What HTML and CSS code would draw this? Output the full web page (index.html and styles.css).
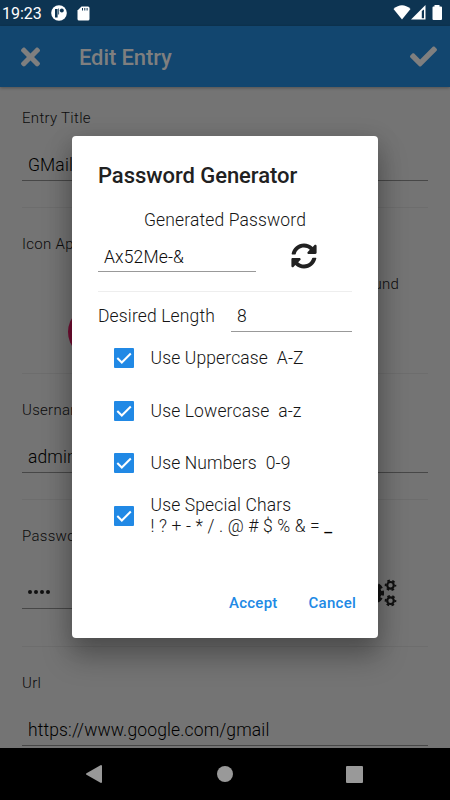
FILE: index.html
```html
<!DOCTYPE html>
<html lang="en">
<head>
<meta charset="utf-8">
<title>Password Generator</title>
<link rel="stylesheet" href="styles.css">
</head>
<body>
<div class="screen">
  <div class="status">
    <span class="clock">19:23</span>
    <svg class="st-app" width="16" height="16" viewBox="0 0 16 16"><circle cx="8" cy="8" r="7.8" fill="#fff"/><path d="M5.300 4v8.500" stroke="#0d3452" stroke-width="2.600" fill="none"/><circle cx="10.800" cy="5.600" r="2" fill="#0d3452"/><path d="M7.600 3.500v6" stroke="#0d3452" stroke-width=".8"/></svg>
    <svg class="st-sd" width="13" height="15" viewBox="0 0 13 15"><path d="M4.500.500H11q1.500 0 1.500 1.500v11q0 1.500-1.500 1.500H2Q.500 14.500.500 13V4.500z" fill="#fff"/><path d="M5.500 2v2.500M7.800 2v2.500M10.100 2v2.500" stroke="#0d3452" stroke-width="1"/></svg>
    <svg class="st-right" width="50" height="16" viewBox="0 0 50 16"><path d="M0.500 4Q9-3.500 17.500 4L9 14.500z" fill="#fff"/><path d="M32.500 0v14.500H18z" fill="#fff"/><path d="M28.800 6v7.200h2.200V4.500z" fill="#0d3452"/><path d="M41.500 1.500V0h5v1.500H48q1 0 1 1V14q0 1-1 1h-7.500q-1 0-1-1V2.500q0-1 1-1z" fill="#fff"/></svg>
  </div>
  <header class="bar">
    <svg class="close" width="19" height="28" viewBox="0 0 352 512"><path fill="currentColor" d="M242.720 256l100.070-100.070c12.280-12.280 12.280-32.190 0-44.480l-22.240-22.240c-12.280-12.280-32.190-12.280-44.480 0L176 189.280 75.930 89.210c-12.280-12.280-32.190-12.280-44.480 0L9.210 111.450c-12.280 12.280-12.280 32.190 0 44.480L109.280 256 9.210 356.070c-12.280 12.280-12.280 32.190 0 44.480l22.240 22.240c12.280 12.280 32.200 12.280 44.480 0L176 322.720l100.070 100.070c12.280 12.280 32.200 12.280 44.480 0l22.240-22.240c12.280-12.280 12.280-32.190 0-44.480L242.720 256z"/></svg>
    <h1>Edit Entry</h1>
    <svg class="check" width="27" height="27" viewBox="0 0 512 512"><path fill="currentColor" d="M173.898 439.404l-166.400-166.400c-9.997-9.997-9.997-26.206 0-36.204l36.203-36.204c9.997-9.998 26.207-9.998 36.204 0L192 312.690 432.095 72.596c9.997-9.997 26.207-9.997 36.204 0l36.203 36.204c9.997 9.997 9.997 26.206 0 36.204l-294.400 294.401c-9.998 9.997-26.207 9.997-36.204-.001z"/></svg>
  </header>
  <main class="form">
    <section class="sec title"><label>Entry Title</label><div class="field">GMail</div></section>
    <section class="sec appearance"><label>Icon Ap</label><div class="cols"><span>und</span></div><i class="swatch"></i></section>
    <section class="sec user"><label>Username</label><div class="field">admin</div></section>
    <section class="sec pass"><label>Password</label>
      <div class="row"><div class="field dots"><i></i><i></i><i></i><i></i></div>
      <svg class="cogs" width="35" height="28" viewBox="0 0 35 28">
        <circle cx="11" cy="14" r="6" fill="none" stroke="currentColor" stroke-width="5"/>
        <circle cx="11" cy="14" r="9.300" fill="none" stroke="currentColor" stroke-width="3.500" stroke-dasharray="4.870 2.430" stroke-dashoffset="2.430"/>
        <g fill="none" stroke="currentColor"><circle cx="28.500" cy="6.300" r="3.300" stroke-width="2.200"/><circle cx="28.500" cy="6.300" r="4.900" stroke-width="1.800" stroke-dasharray="2.600 2.530" stroke-dashoffset="1.300"/><circle cx="28.500" cy="21.700" r="3.300" stroke-width="2.200"/><circle cx="28.500" cy="21.700" r="4.900" stroke-width="1.800" stroke-dasharray="2.600 2.530" stroke-dashoffset="1.300"/></g>
      </svg></div>
    </section>
    <section class="sec url"><label>Url</label><div class="field">https://www.google.com/gmail</div></section>
  </main>
  <nav class="nav">
    <svg width="18" height="20" viewBox="0 0 18 20"><path d="M2 10L16 2v16z" fill="#999" stroke="#999" stroke-width="2" stroke-linejoin="round"/></svg>
    <i class="home"></i><i class="recent"></i>
  </nav>
  <div class="dialog">
    <h2>Password Generator</h2>
    <p class="caption">Generated Password</p>
    <div class="gen"><div class="input">Ax52Me-&amp;</div>
      <svg width="26" height="26" viewBox="0 0 512 512"><path fill="#212121" d="M370.720 133.280C339.458 104.008 298.888 87.962 255.848 88c-77.458.068-144.328 53.178-162.791 126.850-1.344 5.363-6.122 9.150-11.651 9.150H24.103c-7.498 0-13.194-6.807-11.807-14.176C33.933 94.924 134.813 8 256 8c66.448 0 126.791 26.136 171.315 68.685L463.030 40.970C478.149 25.851 504 36.559 504 57.941V192c0 13.255-10.745 24-24 24H345.941c-21.382 0-32.090-25.851-16.971-40.971l41.750-41.749zM32 296h134.059c21.382 0 32.090 25.851 16.971 40.971l-41.750 41.750c31.262 29.273 71.835 45.319 114.876 45.280 77.418-.070 144.315-53.144 162.787-126.849 1.344-5.363 6.122-9.150 11.651-9.150h57.304c7.498 0 13.194 6.807 11.807 14.176C478.067 417.076 377.187 504 256 504c-66.448 0-126.791-26.136-171.315-68.685L48.970 471.030C33.851 486.149 8 475.441 8 454.059V320c0-13.255 10.745-24 24-24z"/></svg>
    </div>
    <div class="length"><span>Desired Length</span><div class="input">8</div></div>
    <ul class="opts">
      <li><svg width="20" height="20" viewBox="0 0 20 20"><rect width="20" height="20" rx="1" fill="#2189e5"/><path d="M3.300 10l4.500 4.500 9-9" fill="none" stroke="#fff" stroke-width="2"/></svg><span>Use Uppercase&nbsp; A-Z</span></li>
      <li><svg width="20" height="20" viewBox="0 0 20 20"><rect width="20" height="20" rx="1" fill="#2189e5"/><path d="M3.300 10l4.500 4.500 9-9" fill="none" stroke="#fff" stroke-width="2"/></svg><span>Use Lowercase&nbsp; a-z</span></li>
      <li><svg width="20" height="20" viewBox="0 0 20 20"><rect width="20" height="20" rx="1" fill="#2189e5"/><path d="M3.300 10l4.500 4.500 9-9" fill="none" stroke="#fff" stroke-width="2"/></svg><span>Use Numbers&nbsp; 0-9</span></li>
      <li><svg width="20" height="20" viewBox="0 0 20 20"><rect width="20" height="20" rx="1" fill="#2189e5"/><path d="M3.300 10l4.500 4.500 9-9" fill="none" stroke="#fff" stroke-width="2"/></svg><span>Use Special Chars<br>! ? + - * / . @ # $ % &amp; = <b class="underscore">_</b></span></li>
    </ul>
    <div class="actions"><span>Accept</span><span>Cancel</span></div>
  </div>
</div>
</body>
</html>
```
FILE: styles.css
```css
* { box-sizing: border-box; margin: 0; padding: 0; }
body { width: 450px; height: 800px; overflow: hidden; font-family: Roboto, "Liberation Sans", sans-serif; }
svg { display: block; flex: none; }
.screen { position: relative; width: 450px; height: 800px; display: flex; flex-direction: column; background: #747474; overflow: hidden; }
.status { height: 26px; flex: none; background: #0d3452; color: #fff; display: flex; align-items: center; padding: 0 7px 0 2px; }
.clock { font-size: 16px; line-height: 26px; width: 49px; margin-top: 2px; }
.st-sd { margin-left: 10px; }
.st-right { margin-left: auto; }
.bar { height: 61px; flex: none; background: #12466f; color: #7f7f7f; display: flex; align-items: center; padding: 0 13px 0 21px; box-shadow: 0 1px 3px rgba(0,0,0,.3); z-index: 1; }
.bar h1 { font-size: 22px; font-weight: 500; letter-spacing: -.1px; margin: 2px 0 0 39px; flex: 1; }
.form { height: 661px; overflow: hidden; padding: 0 22px; color: #0c0c0c; }
.sec { padding-top: 26px; border-bottom: 1px solid #6d6d6d; display: flex; flex-direction: column; }
.sec label { font-size: 15px; font-weight: 300; line-height: 20px; letter-spacing: .3px; height: 20px; flex: none; }
.field { height: 34px; margin-top: 19px; padding: 0 6px; border-bottom: 1px solid #474747; font-size: 17.5px; font-weight: 300; letter-spacing: .13px; line-height: 36px; color: #000; }
.title { height: 121px; padding-top: 21px; }
.appearance { height: 166px; }
.user { height: 126px; }
.pass { height: 147px; }
.url { border-bottom: 0; }
.cols { display: flex; justify-content: flex-end; padding-right: 29px; margin-top: 19px; font-size: 15px; font-weight: 300; letter-spacing: .2px; line-height: 22px; }
.swatch { width: 54px; height: 54px; margin: 10px 0 0 46px; border-radius: 50%; background: #750d33; }
.row { display: flex; justify-content: space-between; padding-right: 31px; margin-top: 25px; }
.row .field { width: 320px; margin-top: 4px; }
.dots { display: flex; gap: 2px; align-items: center; padding-top: 1px; }
.dots i { width: 4px; height: 4px; border-radius: 50%; background: #101010; }
.cogs { color: #111; margin-top: 8px; }
.nav { height: 52px; flex: none; background: #000; display: flex; align-items: center; justify-content: space-between; padding: 0 87px 0 85px; }
.home { width: 16px; height: 16px; border-radius: 50%; background: #999; }
.recent { width: 17px; height: 17px; border-radius: 1px; background: #999; }
.dialog { position: absolute; left: 72px; top: 136px; width: 306px; height: 502px; border-radius: 4px; background: #fff; color: #151515; padding: 25px 26px 0; box-shadow: 0 18px 28px 2px rgba(0,0,0,.26), 0 4px 24px rgba(0,0,0,.15); font-size: 17.5px; font-weight: 300; letter-spacing: .14px; }
.dialog h2 { font-size: 22px; line-height: 30px; font-weight: 500; letter-spacing: -.05px; color: #212121; }
.caption { text-align: center; line-height: 22px; margin-top: 18px; }
.gen { display: flex; justify-content: space-between; height: 61px; padding-right: 35px; border-bottom: 1px solid #eee; }
.input { border-bottom: 1px solid #999; padding: 0 6px; line-height: 30px; color: #0c0c0c; }
.gen .input { width: 158px; height: 30px; margin-top: 11px; }
.gen svg { margin-top: 12px; }
.length { display: flex; justify-content: space-between; height: 40px; align-items: flex-end; }
.length span { height: 27px; line-height: 22px; }
.length .input { width: 121px; height: 31px; }
.opts { list-style: none; }
.opts li { height: 52.5px; display: flex; align-items: center; padding-left: 16px; gap: 16.5px; line-height: 21px; }
.opts span { padding-top: 1px; }
.underscore { font-weight: 400; color: #000; }
.actions { display: flex; justify-content: flex-end; gap: 31px; margin: 51px -4px 0 0; font-size: 15px; letter-spacing: .25px; font-weight: 500; line-height: 20px; color: #2189e5; }
```
